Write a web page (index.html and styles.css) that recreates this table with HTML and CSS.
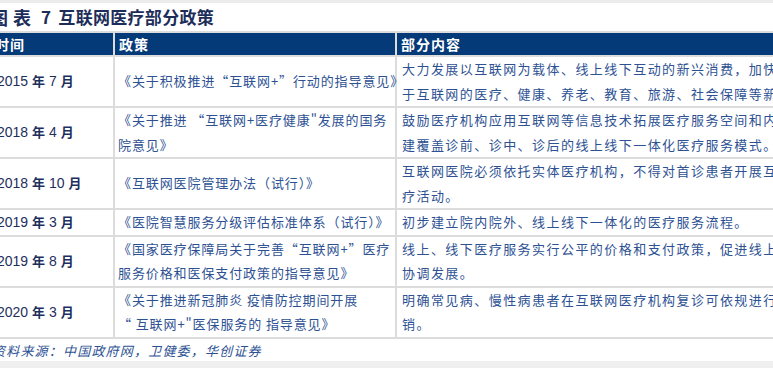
FILE: index.html
```html
<!DOCTYPE html>
<html lang="zh">
<head>
<meta charset="utf-8">
<title>互联网医疗部分政策</title>
<link rel="stylesheet" href="styles.css">
</head>
<body>
<div class="top-strip"></div>
<div class="doc">
  <h1 class="title"><span class="fig">图表</span><span class="num">7</span><span class="name">互联网医疗部分政策</span></h1>
  <table class="policy">
    <colgroup>
      <col class="c-time">
      <col class="c-policy">
      <col class="c-content">
    </colgroup>
    <thead>
      <tr><th>时间</th><th>政策</th><th>部分内容</th></tr>
    </thead>
    <tbody>
      <tr>
        <td class="date">2015 <b>年</b> 7 <b>月</b></td>
        <td class="pol">《关于积极推进“互联网+”行动的指导意见》</td>
        <td class="txt">大力发展以互联网为载体、线上线下互动的新兴消费，加快发展基<br>于互联网的医疗、健康、养老、教育、旅游、社会保障等新兴服务</td>
      </tr>
      <tr>
        <td class="date">2018 <b>年</b> 4 <b>月</b></td>
        <td class="pol">《关于推进 “互联网+医疗健康"发展的国务<br>院意见》</td>
        <td class="txt">鼓励医疗机构应用互联网等信息技术拓展医疗服务空间和内容，构<br>建覆盖诊前、诊中、诊后的线上线下一体化医疗服务模式。</td>
      </tr>
      <tr>
        <td class="date">2018 <b>年</b> 10 <b>月</b></td>
        <td class="pol">《互联网医院管理办法（试行）》</td>
        <td class="txt">互联网医院必须依托实体医疗机构，不得对首诊患者开展互联网诊<br>疗活动。</td>
      </tr>
      <tr>
        <td class="date">2019 <b>年</b> 3 <b>月</b></td>
        <td class="pol">《医院智慧服务分级评估标准体系（试行）》</td>
        <td class="txt">初步建立院内院外、线上线下一体化的医疗服务流程。</td>
      </tr>
      <tr>
        <td class="date">2019 <b>年</b> 8 <b>月</b></td>
        <td class="pol">《国家医疗保障局关于完善“互联网+”医疗<br>服务价格和医保支付政策的指导意见》</td>
        <td class="txt">线上、线下医疗服务实行公平的价格和支付政策，促进线上线下服务<br>协调发展。</td>
      </tr>
      <tr>
        <td class="date">2020 <b>年</b> 3 <b>月</b></td>
        <td class="pol">《关于推进新冠肺炎 疫情防控期间开展<br>“ 互联网+"医保服务的 指导意见》</td>
        <td class="txt">明确常见病、慢性病患者在互联网医疗机构复诊可依规进行医保报<br>销。</td>
      </tr>
    </tbody>
  </table>
  <p class="source">资料来源：中国政府网，卫健委，华创证券</p>
</div>
<div class="bottom-strip"></div>
</body>
</html>
```

FILE: styles.css
```css
html, body {
  margin: 0;
  padding: 0;
  background: #ffffff;
}
body {
  width: 773px;
  height: 368px;
  overflow: hidden;
  font-family: "Noto Sans CJK SC", "Liberation Sans", sans-serif;
  display: flex;
  flex-direction: column;
}
.top-strip {
  height: 3px;
  background: #ececec;
  flex: none;
}
.doc {
  margin-left: -10px;
  width: 880px;
  flex: none;
}
.title {
  margin: 0;
  height: 28px;
  display: flex;
  align-items: center;
  font-size: 17px;
  font-weight: 700;
  color: #1d2d5a;
  letter-spacing: 0.3px;
  line-height: 28px;
}
.title .fig {
  font-size: 18px;
  letter-spacing: 5px;
}
.title .num {
  margin: 0 7px 0 5px;
}
.policy {
  border-collapse: collapse;
  table-layout: fixed;
  width: 870px;
}
.c-time { width: 123px; }
.c-policy { width: 282px; }
.c-content { width: 465px; }
.policy th,
.policy td {
  border: 2px solid #dcdcdc;
  padding: 0 4px;
  text-align: left;
  vertical-align: middle;
  white-space: nowrap;
}
.policy th {
  background: #053a78;
  color: #ffffff;
  font-size: 14px;
  font-weight: 700;
  height: 22px;
  line-height: 22px;
  letter-spacing: 1px;
  padding-left: 3px;
}
.policy th + th {
  padding-left: 4px;
}
.policy td {
  font-size: 13px;
  line-height: 24.5px;
}
.policy td.date {
  font-family: "Liberation Sans", "Noto Sans CJK SC", sans-serif;
  font-size: 14px;
  color: #1e2f5e;
  padding-left: 5px;
}
.policy td.date b {
  font-family: "Noto Sans CJK SC", sans-serif;
  font-weight: 700;
  font-size: 13px;
}
.policy td.pol {
  color: #2d5193;
  letter-spacing: 0.9px;
  padding-left: 3px;
}
.policy td.txt {
  color: #2d5193;
  letter-spacing: 1.45px;
  padding-left: 5px;
}
.source {
  margin: 0;
  height: 22px;
  line-height: 24px;
  padding-left: 2px;
  font-size: 13px;
  font-style: italic;
  color: #2d5193;
  letter-spacing: 1.2px;
}
.bottom-strip {
  flex: 1;
  background: #efefef;
}
```
